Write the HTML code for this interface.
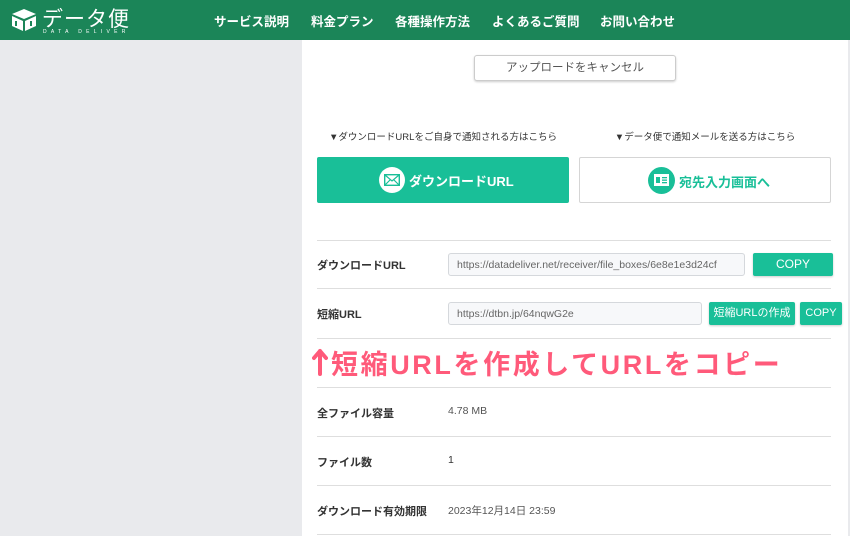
<!DOCTYPE html>
<html><head><meta charset="utf-8"><style>
*{margin:0;padding:0;box-sizing:border-box}
body{width:850px;height:536px;overflow:hidden;background:#e9eaed;font-family:"Liberation Sans","Noto Sans CJK JP",sans-serif;position:relative}
.hdr{position:absolute;left:0;top:0;width:850px;height:40px;background:#1b8558}
.nav{position:absolute;top:11px;color:#fff;font-weight:bold;font-size:12.5px}
.panel{position:absolute;left:302px;top:40px;width:546px;height:496px;background:#fff}
.a{position:absolute}
.lbl{position:absolute;left:317px;font-size:11px;font-weight:bold;color:#333}
.val{position:absolute;left:448px;font-size:10.5px;color:#555}
.line{position:absolute;left:317px;width:514px;height:1px;background:#dedede}
.inp{position:absolute;height:23px;border:1px solid #d5d8dc;background:#f7f8fa;border-radius:3px;font-size:10.5px;color:#666;padding:5px 8px;white-space:nowrap;overflow:hidden}
.btn{position:absolute;height:23px;background:#19bf98;color:#fff;border-radius:2px;font-size:11px;text-align:center;line-height:23px;box-shadow:0 1px 2px rgba(0,0,0,.2)}
</style></head><body>
<div class="hdr">
<svg class="a" style="left:11px;top:8px" width="26" height="24" viewBox="0 0 26 24"><path d="M13 1 L25 6 L13 11 L1 6Z" fill="#fff"/><path d="M1 8 L12 13 L12 23 L1 18Z" fill="#fff"/><path d="M14 13 L25 8 L25 18 L14 23Z" fill="#fff"/><rect x="4" y="13" width="2" height="5" fill="#1b8558"/><rect x="19" y="13" width="2" height="5" fill="#1b8558"/></svg>
<div class="a" style="left:42px;top:3px;color:#fff;font-size:21px;letter-spacing:1px">データ便</div>
<div class="a" style="left:43px;top:29px;color:#fff;font-size:5px;letter-spacing:4.3px">DATA DELIVER</div>
<div class="nav" style="left:214px">サービス説明</div>
<div class="nav" style="left:311px">料金プラン</div>
<div class="nav" style="left:395px">各種操作方法</div>
<div class="nav" style="left:492px">よくあるご質問</div>
<div class="nav" style="left:600px">お問い合わせ</div>
</div>
<div class="panel"></div>
<div class="a" style="left:474px;top:55px;width:202px;height:26px;border:1px solid #ccc;border-radius:3px;box-shadow:0 1px 2px rgba(0,0,0,.2);font-size:11.5px;color:#555;text-align:center;line-height:24px;background:#fff">アップロードをキャンセル</div>
<div class="a" style="left:317px;top:129px;width:252px;text-align:center;font-size:9.5px;color:#333">▼ダウンロードURLをご自身で通知される方はこちら</div>
<div class="a" style="left:579px;top:129px;width:252px;text-align:center;font-size:9.5px;color:#333">▼データ便で通知メールを送る方はこちら</div>
<div class="a" style="left:317px;top:157px;width:252px;height:46px;background:#19bf98;border-radius:2px"></div>
<div class="a" style="left:379px;top:167px;width:26px;height:26px;border-radius:50%;background:#fff"></div>
<svg class="a" style="left:384px;top:174px" width="16" height="12" viewBox="0 0 16 12"><rect x="0.7" y="0.7" width="14.6" height="10.6" fill="none" stroke="#19bf98" stroke-width="1.4"/><path d="M1 1 L8 7 L15 1 M1 11 L6 6 M15 11 L10 6" fill="none" stroke="#19bf98" stroke-width="1.2"/></svg>
<div class="a" style="left:409px;top:171px;color:#fff;font-weight:bold;font-size:13px">ダウンロードURL</div>
<div class="a" style="left:579px;top:157px;width:252px;height:46px;background:#fff;border:1px solid #d5d5d5;border-radius:2px"></div>
<div class="a" style="left:648px;top:167px;width:27px;height:27px;border-radius:50%;background:#19bf98"></div>
<svg class="a" style="left:654px;top:174px" width="15" height="12" viewBox="0 0 15 12"><rect width="15" height="12" fill="#fff"/><rect x="2" y="3" width="4" height="6" fill="#19bf98"/><rect x="8" y="3" width="5" height="1.3" fill="#19bf98"/><rect x="8" y="5.5" width="5" height="1.3" fill="#19bf98"/><rect x="8" y="8" width="5" height="1.3" fill="#19bf98"/></svg>
<div class="a" style="left:679px;top:172px;color:#19bf98;font-weight:bold;font-size:13px">宛先入力画面へ</div>
<div class="line" style="top:240px"></div>
<div class="line" style="top:288px"></div>
<div class="line" style="top:338px"></div>
<div class="line" style="top:387px"></div>
<div class="line" style="top:436px"></div>
<div class="line" style="top:485px"></div>
<div class="line" style="top:534px"></div>
<div class="lbl" style="top:257px">ダウンロードURL</div>
<div class="inp" style="left:448px;top:253px;width:297px">https://datadeliver.net/receiver/file_boxes/6e8e1e3d24cf</div>
<div class="btn" style="left:753px;top:253px;width:80px;font-size:12px">COPY</div>
<div class="lbl" style="top:306px">短縮URL</div>
<div class="inp" style="left:448px;top:302px;width:254px">https://dtbn.jp/64nqwG2e</div>
<div class="btn" style="left:709px;top:302px;width:86px">短縮URLの作成</div>
<div class="btn" style="left:800px;top:302px;width:42px">COPY</div>
<svg class="a" style="left:312px;top:348px" width="16" height="28" viewBox="0 0 16 28"><path d="M8 3 L8 26 M2 10 L8 3 L14 10" fill="none" stroke="#ff5a7a" stroke-width="4" stroke-linecap="round" stroke-linejoin="round"/></svg>
<div class="a" style="left:331px;top:343px;color:#ff5a7a;font-weight:bold;font-size:27px;letter-spacing:2.6px;white-space:nowrap">短縮URLを作成してURLをコピー</div>
<div class="lbl" style="top:405px">全ファイル容量</div><div class="val" style="top:405px">4.78 MB</div>
<div class="lbl" style="top:454px">ファイル数</div><div class="val" style="top:454px;color:#333">1</div>
<div class="lbl" style="top:503px">ダウンロード有効期限</div><div class="val" style="top:503px">2023年12月14日 23:59</div>
</body></html>
